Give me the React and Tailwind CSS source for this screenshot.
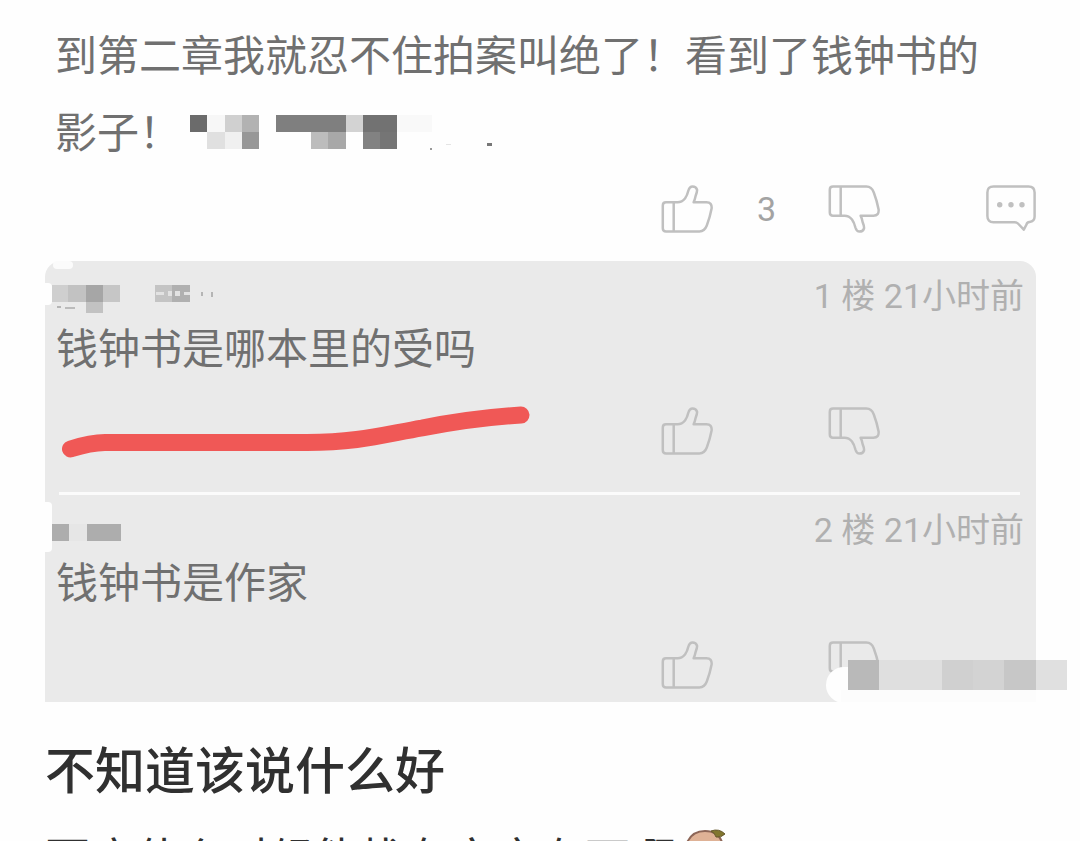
const POST = "到第二章我就忍不住拍案叫绝了！看到了钱钟书的影子！";

// [x, y, width, height, color]
const POST_MASK = [
  [0, 0, 17, 17, "#6b6b6b"], [17, 0, 18, 17, "#f7f7f7"], [35, 0, 17, 17, "#d0d0d0"], [52, 0, 17, 17, "#b2b2b2"],
  [17, 17, 18, 17, "#e0e0e0"], [35, 17, 17, 17, "#f0f0f0"], [52, 17, 17, 17, "#979797"],
  [86, 0, 70, 17, "#7f7f7f"], [156, 0, 17, 17, "#d3d3d3"], [173, 0, 34, 17, "#727272"],
  [121, 17, 17, 17, "#bcbcbc"], [138, 17, 18, 17, "#a8a8a8"], [173, 17, 17, 17, "#828282"], [190, 17, 17, 17, "#757575"],
  [207, 0, 35, 17, "#f9f9f9"], [240, 33, 2, 2, "#999999"], [256, 29, 5, 1, "#e4e4e4"], [297, 28, 5, 3, "#777777"],
];

const NAME_MASK_1 = [
  [0, 0, 16, 17, "#cfcfcf"], [16, 0, 18, 17, "#c2c2c2"], [34, 0, 17, 17, "#a6a6a6"], [51, 0, 17, 17, "#c6c6c6"],
  [34, 17, 17, 11, "#c2c2c2"], [5, 21, 4, 2, "#b5b5b5"], [13, 22, 10, 2, "#bbbbbb"],
  [103, 0, 17, 17, "#c4c4c4"], [120, 0, 18, 17, "#b0b0b0"], [104, 7, 8, 3, "#e2e2e2"], [116, 6, 4, 5, "#e2e2e2"],
  [123, 6, 5, 5, "#e2e2e2"], [132, 7, 6, 3, "#e2e2e2"], [149, 7, 2, 4, "#b5b5b5"], [159, 7, 2, 5, "#b5b5b5"],
];

const NAME_MASK_2 = [
  [0, 5, 17, 17, "#adadad"], [17, 5, 18, 17, "#e6e6e6"], [35, 5, 34, 17, "#adadad"],
];

const CORNER_MASK = [
  [0, 0, 31, 30, "#b9b9b9"], [31, 0, 63, 30, "#dfdfdf"], [94, 0, 31, 30, "#d0d0d0"],
  [125, 0, 31, 30, "#d3d3d3"], [156, 0, 32, 30, "#c7c7c7"], [188, 0, 31, 30, "#e0e0e0"],
];

const COMMENTS = [
  { id: 1, meta: "1 楼 21小时前", text: "钱钟书是哪本里的受吗", mask: NAME_MASK_1 },
  { id: 2, meta: "2 楼 21小时前", text: "钱钟书是作家", mask: NAME_MASK_2 },
];

function Mosaic({ cells, className }) {
  return (
    <svg className={className} shapeRendering="crispEdges" aria-hidden="true">
      {cells.map(([x, y, w, h, fill], i) => (
        <rect key={i} x={x} y={y} width={w} height={h} fill={fill} />
      ))}
    </svg>
  );
}

function Thumb({ down = false }) {
  return (
    <svg viewBox="0 0 52 48" className="h-12 w-[52px]" fill="none" stroke="currentColor" strokeWidth="2.5" strokeLinejoin="round">
      <path
        transform={down ? "matrix(1 0 0 -1 0 48)" : undefined}
        d="M12.7 17.3H5Q1.8 17.3 1.8 20.5V43.2Q1.8 46.4 5 46.4H38.5Q43.5 46.4 45.8 40.5Q49 32 50.6 23.5Q51.2 17.3 45.5 17.3H32.6Q33.8 15 34.6 11Q36.4 6.5 36 4.5Q35 1.4 31.5 1.4Q28.6 1.4 27.4 5.5Q26.2 10.5 24 13.5Q21 17.3 16.5 17.3H12.7V46.4"
      />
    </svg>
  );
}

function BubbleIcon() {
  return (
    <svg viewBox="0 0 50 48" className="h-12 w-[50px]" fill="none" stroke="currentColor" strokeWidth="2.5" strokeLinejoin="round">
      <path d="M7.5 1.4H42.5Q48.6 1.4 48.6 7.5V31.5Q48.6 36.5 43.5 37Q41 37.3 40.5 39.5L37.8 44.6L32.5 39Q31 37.3 28.5 37.3H7.5Q1.4 37.3 1.4 31V7.5Q1.4 1.4 7.5 1.4Z" />
      <g fill="currentColor" stroke="none">
        <circle cx="13.7" cy="19.7" r="2.7" />
        <circle cx="25" cy="19.7" r="2.7" />
        <circle cx="36" cy="19.7" r="2.7" />
      </g>
    </svg>
  );
}

function Actions({ count, reply }) {
  return (
    <div className="flex h-12 items-center justify-end text-[#c0c0c0]">
      <button type="button" aria-label="赞"><Thumb /></button>
      <span className="w-[115px] pl-11 font-[Roboto,sans-serif] text-[34px] leading-12 text-[#a3a3a3]">{count}</span>
      <button type="button" aria-label="踩"><Thumb down /></button>
      <div className="ml-[106px] h-12 w-[50px]">
        {reply && <button type="button" aria-label="回复"><BubbleIcon /></button>}
      </div>
    </div>
  );
}

function Comment({ comment }) {
  return (
    <article className="pt-3">
      <header className="flex h-[46px] items-center justify-between pr-3 pl-[7px]">
        <Mosaic cells={comment.mask} className="mt-[6px] h-7 w-[170px]" />
        <span className="font-[Roboto,'Noto_Sans_CJK_SC',sans-serif] text-[34px] leading-[46px] text-[#b0b0b0]">{comment.meta}</span>
      </header>
      <p className="pl-[11px] text-[42px] leading-[54px] text-[#707070]">{comment.text}</p>
      <div className="pt-[34px]">
        <Actions />
      </div>
    </article>
  );
}

// Hand-drawn red underline below the first reply
function Underline() {
  return (
    <svg viewBox="0 0 480 60" className="absolute top-[140px] left-3 h-[60px] w-[480px]" fill="none" aria-hidden="true">
      <path d="M13.5 48Q34 41.5 48 41.5H250C300 41.5 325 34 365 27Q415 17 464 14" stroke="#f05856" strokeWidth="17" strokeLinecap="round" />
    </svg>
  );
}

function Potato() {
  return (
    <svg viewBox="0 0 44 44" className="h-11 w-11" aria-hidden="true">
      <path d="M2 20Q6 2 22 2Q38 2 40 18Q42 40 22 42Q0 42 2 20Z" fill="#dfb296" stroke="#8d6657" strokeWidth="2" />
      <path d="M28 2Q36-1 42 5Q38 9 33 8Q32 4 28 2Z" fill="#81762f" stroke="#67592d" />
    </svg>
  );
}

export default function App() {
  return (
    <main className="h-screen overflow-hidden bg-[#fefefe] pr-11 pl-[45px] font-['Noto_Sans_CJK_SC',sans-serif]">
      <section className="pt-[14px] pb-7">
        <div className="pr-9 pl-[10px] text-[42px] leading-[77px] text-[#707070]">
          <p>
            {POST}
            <Mosaic cells={POST_MASK} className="mb-2 ml-[9px] inline-block h-9 w-[310px] align-middle" />
          </p>
        </div>
        <div className="pt-[17px]">
          <Actions count={3} reply />
        </div>
      </section>

      <section className="relative rounded-t-2xl bg-[#eaeaea] pb-[13px]">
        <Comment comment={COMMENTS[0]} />
        <hr className="mt-[37px] mr-4 ml-[14px] border-t-3 border-[#fbfbfb]" />
        <Comment comment={COMMENTS[1]} />

        <Underline />

        {/* eraser marks on the left edge */}
        <span className="absolute top-0 left-2 h-2 w-5 rounded-full bg-[#fbfbfb]" />
        <span className="absolute top-[22px] left-0 h-[22px] w-[7px] rounded-r-sm bg-[#fefefe]" />
        <span className="absolute top-[241px] left-0 h-[50px] w-[7px] rounded-r-sm bg-[#fefefe]" />

        {/* covered signature in the bottom corner */}
        <span className="absolute right-[186px] -bottom-px h-9 w-6 rounded-l-full bg-[#fefefe]" />
        <span className="absolute right-0 bottom-0 h-3 w-[195px] bg-[#fcfcfc]" />
        <Mosaic cells={CORNER_MASK} className="absolute -right-[31px] bottom-3 h-[30px] w-[219px]" />
      </section>

      <h1 className="pt-[35px] text-[50px] leading-[60px] font-medium text-[#303030]">不知道该说什么好</h1>
      <p className="mt-[26px] flex text-[45px] leading-[68px] whitespace-nowrap text-[#303030]">
        百度什么时候能找有文字在下啊
        <span className="pt-[6px] pl-2"><Potato /></span>
      </p>
    </main>
  );
}
